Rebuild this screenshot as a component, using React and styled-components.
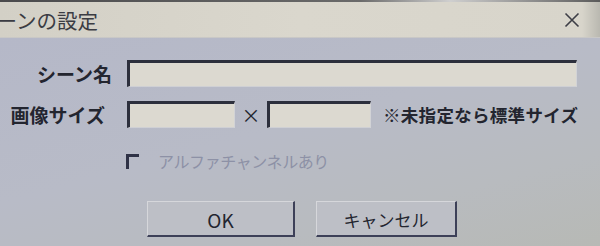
import React from "react";
import styled, { createGlobalStyle } from "styled-components";

const Global = createGlobalStyle`
  html, body { margin: 0; padding: 0; background: #b7bac6; }
  body { font-family: "Noto Sans CJK JP", "Noto Sans", sans-serif; }
  * { box-sizing: border-box; }
`;

const Window = styled.div`
  width: 600px;
  height: 246px;
  overflow: hidden;
  display: flex;
  flex-direction: column;
`;

const Bezel = styled.div`
  height: 2px;
  background: linear-gradient(90deg, #4a4a4c 0%, #6a6a6a 60%, #cfcfcf 75%, #5a5a5a 100%);
`;

const TitleBar = styled.div`
  height: 36px;
  display: flex;
  align-items: center;
  justify-content: space-between;
  padding-right: 20px;
  background: linear-gradient(90deg, #d3d0c6 0%, #dad7cd 50%, #d8d5cb 97%, #b9b8b0 100%);
  border-bottom: 1px solid #c9c8c6;
`;

const Title = styled.span`
  margin-left: -24px;
  margin-top: 2px;
  font-size: 20.5px;
  line-height: 1;
  color: #3b3c43;
  white-space: nowrap;
`;

const Close = styled.svg`
  width: 16px;
  height: 16px;
`;

const Body = styled.div`
  flex: 1;
  display: flex;
  flex-direction: column;
  padding-top: 22px;
  background: linear-gradient(165deg, #b5b8c8 0%, #b8bbc7 45%, #b8bbbf 75%, #b7b9b5 100%);
`;

const Row = styled.div`
  display: flex;
  align-items: center;
  height: 27px;
  margin-bottom: ${(p) => p.$mb || 0}px;
`;

const Label = styled.div`
  width: 127px;
  padding-right: ${(p) => p.$inset}px;
  text-align: right;
  font-size: 19px;
  font-weight: 700;
  line-height: 1;
  color: #23252f;
  white-space: nowrap;
`;

const Field = styled.div`
  width: ${(p) => p.$w}px;
  height: 27px;
  background: #dcd9d0;
  border-top: 3px solid #2c2f3c;
  border-left: 3px solid #2c2f3c;
  border-right: 1px solid #d2d3d6;
  border-bottom: 1px solid #cfd0d4;
`;

const Times = styled.span`
  width: 32px;
  text-align: center;
  font-size: 19px;
  line-height: 1;
  color: #23252f;
`;

const Note = styled.span`
  margin-left: 12px;
  font-size: 17.5px;
  font-weight: 700;
  line-height: 1;
  color: #23252f;
  white-space: nowrap;
  letter-spacing: 0.3px;
`;

const CheckRow = styled.div`
  display: flex;
  align-items: center;
  padding-left: 126px;
  margin-top: 22px;
  height: 22px;
`;

const Box = styled.span`
  width: 13px;
  height: 15px;
  border-top: 3px solid #2f3246;
  border-left: 3px solid #2f3246;
`;

const CheckText = styled.span`
  margin-left: 19px;
  font-size: 16px;
  line-height: 1;
  color: #8d91a6;
  white-space: nowrap;
  letter-spacing: -0.4px;
`;

const Buttons = styled.div`
  display: flex;
  padding-left: 147px;
  gap: 21px;
  margin-top: 29px;
`;

const Button = styled.div`
  width: ${(p) => p.$w}px;
  height: 36px;
  display: flex;
  align-items: center;
  justify-content: center;
  background: #bdbfc6;
  border-top: 1px solid #d6d7db;
  border-left: 1px solid #d6d7db;
  border-right: 2px solid #3d4058;
  border-bottom: 2px solid #3d4058;
  font-size: ${(p) => p.$fs}px;
  line-height: 1;
  color: #23252f;
  padding-top: 1px;
`;

export default function App() {
  return (
    <>
      <Global />
      <Window>
        <Bezel />
        <TitleBar>
          <Title>シーンの設定</Title>
          <Close viewBox="0 0 16 16">
            <path d="M1.5 1.5 L14.5 14.5 M14.5 1.5 L1.5 14.5" stroke="#3d3e46" strokeWidth="1.6" fill="none" />
          </Close>
        </TitleBar>
        <Body>
          <Row $mb={14}>
            <Label $inset={15}>シーン名</Label>
            <Field $w={450} />
          </Row>
          <Row>
            <Label $inset={22}>画像サイズ</Label>
            <Field $w={108} />
            <Times>×</Times>
            <Field $w={104} />
            <Note>※未指定なら標準サイズ</Note>
          </Row>
          <CheckRow>
            <Box />
            <CheckText>アルファチャンネルあり</CheckText>
          </CheckRow>
          <Buttons>
            <Button $w={148} $fs={19}>OK</Button>
            <Button $w={141} $fs={17}>キャンセル</Button>
          </Buttons>
        </Body>
      </Window>
    </>
  );
}
